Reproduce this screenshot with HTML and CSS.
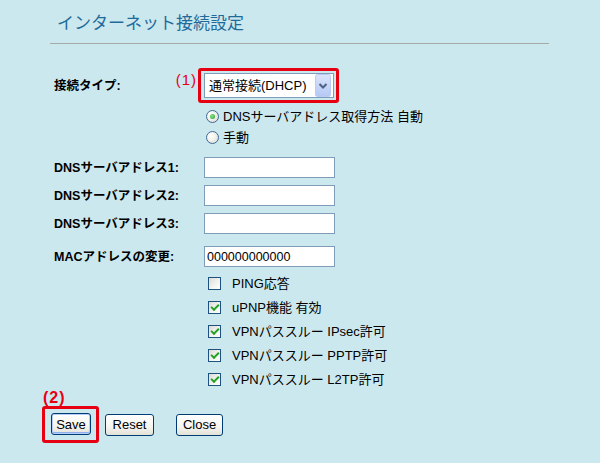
FILE: index.html
```html
<!DOCTYPE html>
<html lang="ja">
<head>
    <meta charset="UTF-8">
    <meta name="viewport" content="width=device-width, initial-scale=1.0">
    <title>インターネット接続設定</title>
    <link rel="stylesheet" href="styles.css">
</head>
<body>
    <h1 class="title">インターネット接続設定</h1>

    <form class="settings">
        <div class="row row-type">
            <label class="field-label">接続タイプ:</label>
            <div class="field">
                <div class="callout callout-select">
                    <span class="callout-num num-1">(1)</span>
                    <div class="select">
                        <span class="select-text">通常接続(DHCP)</span>
                        <svg class="select-btn" width="16" height="23" viewBox="0 0 16 23">
                            <defs>
                                <linearGradient id="btnGrad" x1="0" y1="0" x2="0" y2="1">
                                    <stop offset="0" stop-color="#dbe5fb"/>
                                    <stop offset="1" stop-color="#b4c8f6"/>
                                </linearGradient>
                            </defs>
                            <rect x="0.5" y="0.5" width="15" height="22" rx="2" fill="url(#btnGrad)" stroke="#b9cbf3"/>
                            <path d="M4.5 10 L8 13.5 L11.5 10" fill="none" stroke="#4d6185" stroke-width="2"/>
                        </svg>
                    </div>
                </div>
            </div>
        </div>

        <div class="row row-option first">
            <span></span>
            <div class="field option">
                <span class="radio checked"></span>DNSサーバアドレス取得方法 自動
            </div>
        </div>
        <div class="row row-option">
            <span></span>
            <div class="field option">
                <span class="radio"></span>手動
            </div>
        </div>

        <div class="row row-input first">
            <label class="field-label">DNSサーバアドレス1:</label>
            <div class="field"><input class="text-input" type="text"></div>
        </div>
        <div class="row row-input">
            <label class="field-label">DNSサーバアドレス2:</label>
            <div class="field"><input class="text-input" type="text"></div>
        </div>
        <div class="row row-input">
            <label class="field-label">DNSサーバアドレス3:</label>
            <div class="field"><input class="text-input" type="text"></div>
        </div>
        <div class="row row-input mac">
            <label class="field-label">MACアドレスの変更:</label>
            <div class="field"><input class="text-input" type="text" value="000000000000"></div>
        </div>

        <div class="row row-check first">
            <span></span>
            <div class="field check"><span class="checkbox"></span>PING応答</div>
        </div>
        <div class="row row-check">
            <span></span>
            <div class="field check"><span class="checkbox checked"></span>uPNP機能 有効</div>
        </div>
        <div class="row row-check">
            <span></span>
            <div class="field check"><span class="checkbox checked"></span>VPNパススルー IPsec許可</div>
        </div>
        <div class="row row-check">
            <span></span>
            <div class="field check"><span class="checkbox checked"></span>VPNパススルー PPTP許可</div>
        </div>
        <div class="row row-check">
            <span></span>
            <div class="field check"><span class="checkbox checked"></span>VPNパススルー L2TP許可</div>
        </div>

        <div class="actions">
            <div class="callout callout-save">
                <span class="callout-num num-2">(2)</span>
                <button type="button" class="btn btn-save">Save</button>
            </div>
            <button type="button" class="btn btn-reset">Reset</button>
            <button type="button" class="btn btn-close">Close</button>
        </div>
    </form>
</body>
</html>
```

FILE: styles.css
```css
* {
    margin: 0;
    padding: 0;
    box-sizing: border-box;
}

body {
    font-family: "Liberation Sans", "Noto Sans CJK JP", sans-serif;
    background-color: #cce8ef;
    color: #000;
    width: 600px;
    min-height: 463px;
}

.title {
    margin: 0 51px 0 50px;
    padding: 14px 0 9px 7px;
    font-size: 17px;
    line-height: 20px;
    font-weight: normal;
    color: #1f6c9a;
    border-bottom: 1px solid #a3aaa7;
}

.settings {
    margin-top: 24px;
    padding-left: 54px;
}

.row {
    display: grid;
    grid-template-columns: 150px 1fr;
    align-items: center;
}

.field-label {
    font-size: 12.5px;
    font-weight: bold;
    line-height: 14px;
}

.field {
    display: flex;
    align-items: center;
    font-size: 13px;
    line-height: 15px;
}

/* connection type */
.row-type {
    height: 35px;
}

.callout {
    position: relative;
    border: 3px solid #e60012;
    border-radius: 3px;
}

.callout-select {
    margin-left: -6px;
    padding: 2px 2px 2px 3px;
}

.callout-num {
    position: absolute;
    color: #e60012;
    white-space: nowrap;
}

.num-1 {
    right: calc(100% + 4px);
    top: 0;
    font-size: 15px;
    line-height: 17px;
    letter-spacing: 1px;
}

.select {
    width: 130px;
    height: 25px;
    border: 1px solid #7f9db9;
    background-color: #fff;
    display: flex;
    align-items: center;
    justify-content: space-between;
    padding: 0 2px 0 4px;
}

.select-text {
    font-size: 13px;
    line-height: 15px;
}

.select-btn {
    display: block;
}

/* radio options */
.row-option {
    height: 21px;
}

.row-option.first {
    margin-top: 3px;
}

.radio {
    width: 13px;
    height: 13px;
    margin: 0 4px 0 2px;
    border: 1px solid #3f6a96;
    border-radius: 50%;
    background: radial-gradient(circle at 35% 35%, #fff 0%, #f2f2ee 45%, #d4d2ca 100%);
    display: flex;
    align-items: center;
    justify-content: center;
    flex-shrink: 0;
}

.radio.checked::after {
    content: "";
    width: 5px;
    height: 5px;
    border-radius: 50%;
    background: radial-gradient(circle at 40% 40%, #8fe08f, #21a121);
}

/* text inputs */
.row-input {
    height: 21px;
    margin-top: 7px;
}

.row-input.first {
    margin-top: 9px;
}

.row-input.mac {
    margin-top: 12px;
}

.text-input {
    width: 131px;
    height: 21px;
    border: 1px solid #7f9db9;
    background-color: #fff;
    padding: 0 2px;
    font-family: "Liberation Sans", sans-serif;
    font-size: 12.5px;
    color: #000;
    outline: none;
}

/* checkboxes */
.row-check {
    height: 24px;
}

.row-check.first {
    margin-top: 4px;
}

.checkbox {
    width: 13px;
    height: 13px;
    margin: 0 11px 0 4px;
    border: 1px solid #1c5180;
    background: linear-gradient(135deg, #dcdcd5 0%, #f4f4f1 60%, #fff 100%);
    display: flex;
    align-items: center;
    justify-content: center;
    flex-shrink: 0;
}

.checkbox.checked::after {
    content: "";
    width: 6px;
    height: 3px;
    border-left: 2px solid #21a121;
    border-bottom: 2px solid #21a121;
    transform: translateY(-1px) rotate(-45deg);
}

/* buttons */
.actions {
    display: flex;
    align-items: center;
    margin-top: 15px;
    margin-left: -12px;
}

.callout-save {
    padding: 4px 5px 5px 6px;
}

.num-2 {
    left: -2px;
    top: -20px;
    font-size: 16px;
    line-height: 18px;
    font-weight: bold;
    letter-spacing: 1px;
}

.btn {
    height: 22px;
    border: 1px solid #003c74;
    border-radius: 3px;
    background: linear-gradient(#ffffff 0%, #f5f4ef 60%, #e3e1d8 100%);
    font-family: "Liberation Sans", sans-serif;
    font-size: 13px;
    color: #000;
    cursor: pointer;
}

.btn-save {
    width: 40px;
    box-shadow: inset 0 0 0 1px #b5cdf7, inset 0 -1px 0 1px #8fb0ea;
}

.btn-reset {
    width: 49px;
    margin-left: 6px;
}

.btn-close {
    width: 47px;
    margin-left: 22px;
}
```
